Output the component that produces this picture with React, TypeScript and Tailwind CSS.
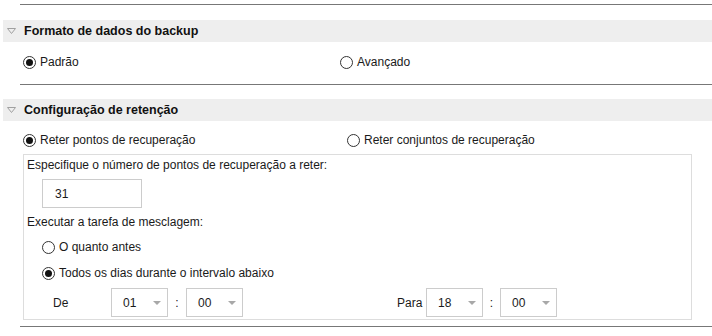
import type { ReactNode } from 'react'

const FONT = "font-['Liberation_Sans',Arial,sans-serif]"

function Radio({ checked = false, label }: { checked?: boolean; label: string }) {
  return (
    <span className="flex items-center gap-[4px]">
      <span className="flex h-[13px] w-[13px] items-center justify-center rounded-full border border-[#333] bg-white">
        {checked && <span className="h-[7px] w-[7px] rounded-full bg-[#111]" />}
      </span>
      <span>{label}</span>
    </span>
  )
}

function SectionHeader({ title }: { title: string }) {
  return (
    <div className="ml-[3px] flex h-[22px] items-center bg-[#eeeeee]">
      <svg className="ml-[4px] mr-[8px]" width="9" height="6" viewBox="0 0 9 6">
        <polygon points="0.5,0.5 8.5,0.5 4.5,5.5" fill="none" stroke="#a0a0a0" strokeWidth="1" />
      </svg>
      <span className="text-[12.5px] font-bold text-[#111]">{title}</span>
    </div>
  )
}

function Select({ value }: { value: string }) {
  return (
    <div className="flex h-[29px] w-[57px] items-center justify-between border border-[#cccccc] bg-white pl-[11px] pr-[6px]">
      <span>{value}</span>
      <svg width="8" height="4" viewBox="0 0 8 4">
        <polygon points="0,0 8,0 4,4" fill="#a8a8a8" />
      </svg>
    </div>
  )
}

function Rule() {
  return <div className="ml-[20px] h-px bg-[#777777]" />
}

function Row({ children, className = '' }: { children: ReactNode; className?: string }) {
  return <div className={`flex h-[20px] items-center ${className}`}>{children}</div>
}

export default function App() {
  return (
    <div className={`h-[336px] w-[712px] overflow-hidden bg-white text-[12px] text-[#1a1a1a] ${FONT}`}>
      <div className="h-[4px]" />
      <Rule />

      <div className="mt-[15px]">
        <SectionHeader title="Formato de dados do backup" />
      </div>
      <Row className="mt-[10px] pl-[23px]">
        <div className="w-[317px]">
          <Radio checked label="Padrão" />
        </div>
        <Radio label="Avançado" />
      </Row>

      <div className="mt-[12px]">
        <Rule />
      </div>

      <div className="mt-[14px]">
        <SectionHeader title="Configuração de retenção" />
      </div>
      <Row className="mt-[9px] pl-[23px]">
        <div className="w-[324px]">
          <Radio checked label="Reter pontos de recuperação" />
        </div>
        <Radio label="Reter conjuntos de recuperação" />
      </Row>

      <div className="ml-[23px] mt-[4px] w-[669px] border border-[#dddddd] pb-[2px]">
        <Row className="pl-[3px]">Especifique o número de pontos de recuperação a reter:</Row>
        <div className="ml-[18px] mt-[4px] flex h-[29px] w-[100px] items-center border border-[#cccccc] pl-[12px]">
          31
        </div>
        <Row className="mt-[4px] pl-[3px]">Executar a tarefa de mesclagem:</Row>
        <Row className="mt-[5px] pl-[18px]">
          <Radio label="O quanto antes" />
        </Row>
        <Row className="mt-[6px] pl-[18px]">
          <Radio checked label="Todos os dias durante o intervalo abaixo" />
        </Row>
        <div className="mt-[5px] flex h-[29px] items-center">
          <span className="ml-[29px] w-[58px]">De</span>
          <Select value="01" />
          <span className="w-[18px] text-center">:</span>
          <Select value="00" />
          <span className="ml-[154px] w-[29px]">Para</span>
          <Select value="18" />
          <span className="w-[17px] text-center">:</span>
          <Select value="00" />
        </div>
      </div>

      <div className="mt-[6px]">
        <Rule />
      </div>
    </div>
  )
}
